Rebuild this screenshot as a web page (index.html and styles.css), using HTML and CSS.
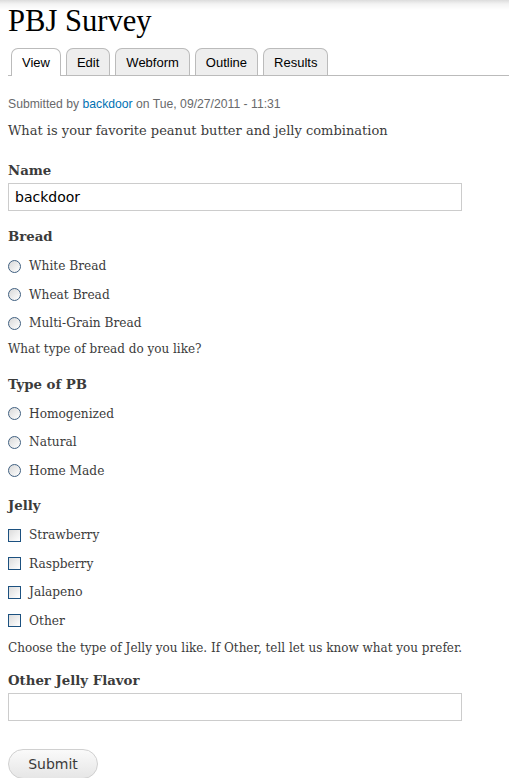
FILE: index.html
```html
<!DOCTYPE html>
<html>
<head>
<meta charset="utf-8">
<title>PBJ Survey</title>
<link rel="stylesheet" href="styles.css">
</head>
<body>
<div class="page">
  <h1 class="title">PBJ Survey</h1>
  <ul class="tabs">
    <li class="tab active">View</li>
    <li class="tab">Edit</li>
    <li class="tab">Webform</li>
    <li class="tab">Outline</li>
    <li class="tab">Results</li>
  </ul>
  <div class="meta">Submitted by <a class="link">backdoor</a> on Tue, 09/27/2011 - 11:31</div>
  <p class="intro">What is your favorite peanut butter and jelly combination</p>

  <div class="field first">
    <div class="label">Name</div>
    <div class="textbox">backdoor</div>
  </div>

  <div class="field">
    <div class="label">Bread</div>
    <div class="options">
      <div class="option"><span class="radio"></span>White Bread</div>
      <div class="option"><span class="radio"></span>Wheat Bread</div>
      <div class="option"><span class="radio"></span>Multi-Grain Bread</div>
    </div>
    <div class="help">What type of bread do you like?</div>
  </div>

  <div class="field">
    <div class="label">Type of PB</div>
    <div class="options">
      <div class="option"><span class="radio"></span>Homogenized</div>
      <div class="option"><span class="radio"></span>Natural</div>
      <div class="option"><span class="radio"></span>Home Made</div>
    </div>
  </div>

  <div class="field after-options">
    <div class="label">Jelly</div>
    <div class="options">
      <div class="option"><span class="check"></span>Strawberry</div>
      <div class="option"><span class="check"></span>Raspberry</div>
      <div class="option"><span class="check"></span>Jalapeno</div>
      <div class="option"><span class="check"></span>Other</div>
    </div>
    <div class="help help-jelly">Choose the type of Jelly you like. If Other, tell let us know what you prefer.</div>
  </div>

  <div class="field last">
    <div class="label">Other Jelly Flavor</div>
    <div class="textbox"></div>
  </div>

  <div class="actions">
    <span class="button">Submit</span>
  </div>
</div>
</body>
</html>
```
FILE: styles.css
```css
html, body {
  margin: 0;
  padding: 0;
}
body {
  background: linear-gradient(to bottom, #dcdcdc 0px, #f3f3f3 4px, #ffffff 10px) no-repeat;
  background-color: #fff;
  color: #3b3b3b;
  font-family: "DejaVu Serif", Georgia, serif;
  overflow: hidden;
}
.page {
  padding: 0 0 0 8px;
}
.title {
  margin: 0;
  padding-top: 4px;
  font-family: "Liberation Serif", "Times New Roman", Tinos, "Noto Serif", "DejaVu Serif", serif;
  font-weight: normal;
  font-size: 30.6px;
  line-height: 34px;
  color: #000;
}
.tabs {
  list-style: none;
  margin: 10px 0 0 0;
  padding: 0 0 0 3px;
  display: flex;
  gap: 5px;
  border-bottom: 1px solid #bbb;
  height: 27px;
  align-items: flex-end;
}
.tab {
  font-family: "Liberation Sans", Arial, sans-serif;
  font-size: 13px;
  color: #000;
  background: #eeeeee;
  border: 1px solid #bbb;
  border-bottom: none;
  border-radius: 7px 7px 0 0;
  height: 27px;
  line-height: 27px;
  padding: 0 10px;
  box-sizing: border-box;
}
.tab.active {
  background: #fff;
  height: 28px;
  margin-bottom: -1px;
}
.meta {
  font-family: "Liberation Sans", Arial, sans-serif;
  font-size: 12.2px;
  color: #68696b;
  margin-top: 20px;
  line-height: 16px;
}
.link {
  color: #0071b3;
}
.intro {
  margin: 9px 0 0 0;
  font-size: 13px;
  line-height: 20px;
}
.field {
  margin-top: 16px;
}
.field.first {
  margin-top: 20px;
}
.field.after-options {
  margin-top: 11px;
}
.field.last {
  margin-top: 13px;
}
.label {
  font-weight: bold;
  font-size: 13.3px;
  line-height: 20px;
}
.textbox {
  margin-top: 2px;
  width: 454px;
  height: 28px;
  box-sizing: border-box;
  border: 1px solid #ccc;
  font-family: "DejaVu Sans", Tahoma, sans-serif;
  font-size: 14px;
  color: #000;
  line-height: 26px;
  padding-left: 6px;
}
.options {
  margin-top: 5px;
}
.option {
  display: flex;
  align-items: center;
  height: 28.5px;
  font-size: 12.2px;
}
.radio {
  width: 11px;
  height: 11px;
  border: 1px solid #3f5f80;
  border-radius: 50%;
  background: linear-gradient(135deg, #d8d8d8, #ffffff);
  margin-right: 8px;
  flex: none;
}
.check {
  width: 11px;
  height: 11px;
  border: 1px solid #1c5180;
  background: linear-gradient(135deg, #dcdcdc, #ffffff);
  margin-right: 8px;
  flex: none;
}
.help {
  font-size: 12px;
  line-height: 20px;
  margin-top: 1px;
}
.help.help-jelly {
  margin-top: 3px;
}
.actions {
  margin-top: 28px;
}
.button {
  display: inline-block;
  width: 90px;
  height: 30px;
  box-sizing: border-box;
  border: 1px solid #d0d0d0;
  border-radius: 15px;
  background: linear-gradient(to bottom, #fafafa, #e6e6e6);
  text-align: center;
  font-family: "DejaVu Sans", Tahoma, sans-serif;
  font-size: 14px;
  line-height: 28px;
  color: #3a3a3a;
}
```
